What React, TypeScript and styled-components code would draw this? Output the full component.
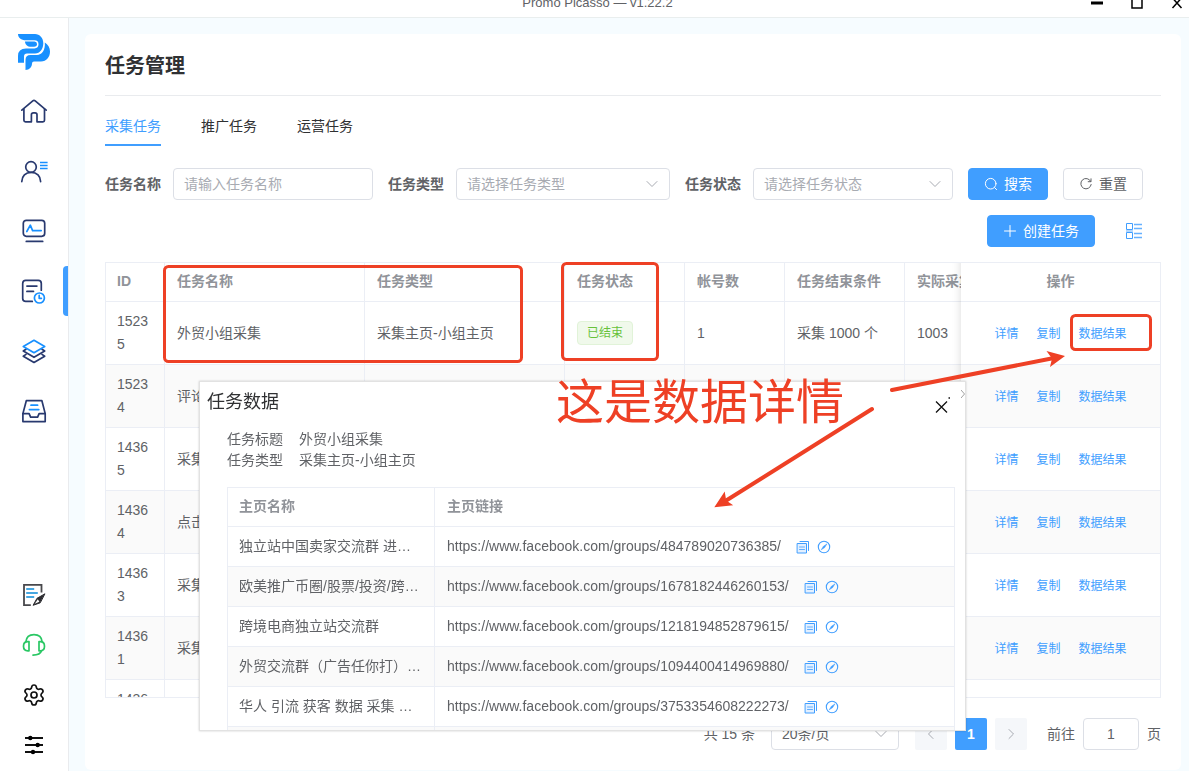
import React from "react";
import styled, { createGlobalStyle, css } from "styled-components";
import { Settings } from "lucide-react";

const color = {
  primary: "#409eff",
  brand: "#1890ff",
  navy: "#28396f",
  heading: "#303133",
  text: "#606266",
  muted: "#909399",
  placeholder: "#a8abb2",
  line: "#ebeef5",
  control: "#dcdfe6",
  stripe: "#fafafa",
  canvas: "#f6fcff",
  mark: "#ee4025",
};

const GlobalStyle = createGlobalStyle`
  *, *::before, *::after { box-sizing: border-box; }
  body {
    margin: 0;
    background: ${color.canvas};
    color: ${color.text};
    font-family: "Liberation Sans", "Noto Sans CJK SC", sans-serif;
    font-size: 14px;
  }
  button, input, select { font: inherit; color: inherit; margin: 0; }
  button { cursor: pointer; }
  svg { display: block; flex: none; }
`;

const Page = styled.div`
  position: relative;
  display: flex;
  flex-direction: column;
  min-height: 100vh;
  overflow: hidden;
`;

const TitleBar = styled.header`
  height: 18px;
  background: #fff;
  border-bottom: 1px solid #e9eeee;
  overflow: hidden;
`;

const TitleStrip = styled.div`
  display: grid;
  grid-template-columns: 1fr auto 1fr;
  align-items: center;
  height: 30px;
  margin-top: -12px;
  padding: 0 6px 0 12px;
`;

const WindowTitle = styled.span`
  grid-column: 2;
  font-size: 13px;
  line-height: 16px;
`;

const WindowButtons = styled.div`
  display: flex;
  justify-content: flex-end;
  gap: 28px;
`;

const BareButton = styled.button`
  display: inline-flex;
  align-items: center;
  justify-content: center;
  padding: 0;
  border: 0;
  background: none;
`;

const Body = styled.div`
  display: flex;
  flex: 1;
`;

const Sidebar = styled.nav`
  display: flex;
  flex-direction: column;
  flex: none;
  width: 69px;
  padding: 16px 0 1px;
  background: #fff;
  border-right: 1px solid #e9ebee;
`;

const Logo = styled.a`
  display: block;
  margin: 0 0 11px 18px;
`;

const NavItem = styled.a<{ $active?: boolean; $small?: boolean }>`
  position: relative;
  display: flex;
  align-items: center;
  justify-content: center;
  height: ${(p) => (p.$small ? 50 : 60)}px;
  ${(p) =>
    p.$active &&
    css`
      &::after {
        content: "";
        position: absolute;
        right: 0;
        width: 5px;
        height: 50px;
        border-radius: 4px 0 0 4px;
        background: ${color.primary};
      }
    `}
`;

const NavFooter = styled.div`
  margin-top: auto;
`;

const Main = styled.main`
  flex: 1;
  min-width: 0;
  padding: 16px 8px 1px 16px;
`;

const Card = styled.section`
  padding: 20px;
  background: #fff;
  border-radius: 6px;
`;

const Heading = styled.h1`
  margin: 0;
  padding-bottom: 17px;
  border-bottom: 1px solid #e9ebee;
  color: ${color.heading};
  font-size: 20px;
  line-height: 24px;
`;

const Tabs = styled.div`
  display: flex;
  gap: 40px;
  margin: 10px 0 22px;
`;

const Tab = styled.button<{ $active?: boolean }>`
  height: 40px;
  padding: 0;
  border: 0;
  border-bottom: 2px solid ${(p) => (p.$active ? color.primary : "transparent")};
  background: none;
  color: ${(p) => (p.$active ? color.primary : color.heading)};
`;

const Toolbar = styled.form`
  display: flex;
  flex-wrap: wrap;
  gap: 15px;
`;

const Field = styled.label`
  display: flex;
  align-items: center;
  gap: 12px;
  font-weight: 700;
`;

const FieldName = styled.span`
  padding-bottom: 2px;
`;

const controlStyle = css`
  height: 32px;
  padding: 0 10px;
  border: 1px solid ${color.control};
  border-radius: 4px;
  background: #fff;
  font-weight: 400;
  outline: 0;
`;

const TextInput = styled.input`
  ${controlStyle}
  width: 200px;
  &::placeholder {
    color: ${color.placeholder};
    opacity: 1;
  }
`;

const SelectWrap = styled.span<{ $width: number; $placeholder?: boolean }>`
  position: relative;
  width: ${(p) => p.$width}px;
  color: ${(p) => (p.$placeholder ? color.placeholder : color.text)};
  > svg {
    position: absolute;
    right: 11px;
    top: 9px;
    pointer-events: none;
  }
`;

const NativeSelect = styled.select`
  ${controlStyle}
  width: 100%;
  appearance: none;
`;

const Button = styled.button<{ $primary?: boolean }>`
  display: inline-flex;
  align-items: center;
  gap: 6px;
  height: 32px;
  padding: 0 15px 2px;
  border: 1px solid ${(p) => (p.$primary ? color.primary : color.control)};
  border-radius: 4px;
  background: ${(p) => (p.$primary ? color.primary : "#fff")};
  color: ${(p) => (p.$primary ? "#fff" : color.text)};
  > svg {
    margin-top: 2px;
  }
`;

const Actions = styled.div`
  display: flex;
  justify-content: flex-end;
  gap: 30px;
  margin: 15px 0;
  padding-right: 18px;
`;

const TableFrame = styled.div`
  height: 436px;
  border: 1px solid ${color.line};
  overflow: hidden;
`;

const Table = styled.table`
  width: 100%;
  border-collapse: separate;
  border-spacing: 0;
  table-layout: fixed;
`;

const Th = styled.th<{ $width?: number }>`
  width: ${(p) => (p.$width ? `${p.$width}px` : "auto")};
  height: 39px;
  padding: 0 12px 2px;
  border-right: 1px solid ${color.line};
  border-bottom: 1px solid ${color.line};
  background: #fff;
  color: ${color.muted};
  line-height: 22px;
  text-align: left;
  white-space: nowrap;
  &:first-child {
    padding-left: 11px;
  }
`;

const Td = styled.td`
  padding: 8px 12px;
  border-right: 1px solid ${color.line};
  border-bottom: 1px solid ${color.line};
  line-height: 23px;
  word-break: break-all;
  &:first-child {
    padding-left: 11px;
  }
`;

const Tr = styled.tr<{ $height: number }>`
  height: ${(p) => p.$height}px;
  td {
    background: #fff;
  }
  &:nth-child(even) td {
    background: ${color.stripe};
  }
  > :last-child {
    border-right: 0;
  }
`;

const pinned = css`
  position: sticky;
  right: 0;
  border-right: 0;
  text-align: center;
  &::before {
    content: "";
    position: absolute;
    top: 0;
    bottom: -1px;
    left: -10px;
    width: 10px;
    box-shadow: inset -10px 0 10px -10px rgba(0, 0, 0, 0.15);
  }
`;

const PinnedTh = styled(Th)`
  ${pinned}
`;

const PinnedTd = styled(Td)`
  ${pinned}
`;

const Links = styled.div`
  display: flex;
  justify-content: center;
  gap: 18px;
  padding-top: 3px;
`;

const RowLink = styled.a`
  color: ${color.primary};
  font-size: 12px;
  text-decoration: none;
`;

const Tag = styled.span`
  display: inline-block;
  height: 24px;
  padding: 0 9px;
  border: 1px solid #e1f3d8;
  border-radius: 4px;
  background: #f0f9eb;
  color: #67c23a;
  font-size: 12px;
  line-height: 22px;
  vertical-align: middle;
`;

const Pagination = styled.div`
  display: flex;
  align-items: center;
  justify-content: flex-end;
  gap: 8px;
  margin-top: 20px;
`;

const Total = styled.span`
  margin-right: 8px;
  padding-bottom: 2px;
`;

const Pages = styled.div`
  display: flex;
  gap: 8px;
  margin: 0 12px 0 8px;
`;

const PageButton = styled.button<{ $current?: boolean }>`
  display: flex;
  align-items: center;
  justify-content: center;
  width: 32px;
  height: 32px;
  padding: 0;
  border: 0;
  border-radius: 2px;
  background: ${(p) => (p.$current ? color.primary : "#f5f7fa")};
  color: ${(p) => (p.$current ? "#fff" : color.placeholder)};
  font-weight: 700;
`;

const Jumper = styled.label`
  display: flex;
  align-items: center;
  gap: 8px;
  > span {
    padding-bottom: 2px;
  }
`;

const PageInput = styled.input`
  ${controlStyle}
  width: 56px;
  text-align: center;
`;

const Dialog = styled.section`
  position: absolute;
  left: 199px;
  top: 381px;
  width: 767px;
  height: 350px;
  padding: 0 10px 0 27px;
  border: 1px solid #e2e2e2;
  background: #fff;
  box-shadow: 0 0 2px rgba(0, 0, 0, 0.2);
  overflow: hidden;
`;

const DialogHeader = styled.div`
  display: flex;
  align-items: center;
  justify-content: space-between;
  height: 38px;
  margin-left: -20px;
  padding-right: 4px;
`;

const DialogTitle = styled.h2`
  margin: 0;
  padding-bottom: 2px;
  color: ${color.heading};
  font-size: 18px;
  font-weight: 400;
`;

const CloseButton = styled(BareButton)`
  align-self: flex-end;
  padding-bottom: 4px;
`;

const Facts = styled.dl`
  display: grid;
  grid-template-columns: auto 1fr;
  column-gap: 16px;
  margin: 9px 0 16px;
  line-height: 21px;
  dd {
    margin: 0;
  }
`;

const DataTable = styled(Table)`
  border: 1px solid ${color.line};
  border-bottom: 0;
`;

const NameTd = styled(Td)`
  white-space: nowrap;
`;

const LinkCell = styled.div`
  display: flex;
  align-items: center;
  gap: 7px;
  color: ${color.primary};
`;

const LinkText = styled.span`
  margin-right: 8px;
  color: ${color.text};
`;

const EdgeArrow = styled.svg`
  position: absolute;
  right: 0;
  top: 6px;
`;

const Marks = styled.svg`
  position: absolute;
  left: 0;
  top: 0;
  pointer-events: none;
`;

const MarkText = styled.div`
  position: absolute;
  left: 556px;
  top: 379px;
  color: ${color.mark};
  font-size: 48px;
  line-height: 48px;
  white-space: nowrap;
`;

function Glyph({ size = 28, stroke = color.navy, width = 1.7, children }: {
  size?: number;
  stroke?: string;
  width?: number;
  children: React.ReactNode;
}) {
  return (
    <svg width={size} height={size} viewBox={`0 0 ${size} ${size}`} fill="none" stroke={stroke} strokeWidth={width} strokeLinecap="round" strokeLinejoin="round" aria-hidden="true">
      {children}
    </svg>
  );
}

const HomeIcon = () => (
  <Glyph>
    <path d="M1.8 13.2 12.8 3.8q1.2-1 2.4 0l11 9.4" />
    <path d="M3.9 12.2v11q0 1.6 1.6 1.6h5.9v-7q0-2 2-2h1.6q2 0 2 2v7h5.9q1.6 0 1.6-1.6v-11" />
  </Glyph>
);

const UserIcon = () => (
  <Glyph>
    <circle cx="11" cy="10" r="5.3" />
    <path d="M1.8 24.6C1.8 19 5.6 15.3 11.2 15.3s9.4 3.7 9.4 9.3" />
    <g stroke={color.brand} strokeWidth="1.4" strokeLinecap="butt">
      <path d="M20 5.5h7.6M20 8.5h7.6M20 11.5h7.6" />
    </g>
  </Glyph>
);

const MonitorIcon = () => (
  <Glyph>
    <rect x="3.3" y="3.3" width="21.4" height="16" rx="3" />
    <path d="M6.3 24.4h16.4" />
    <path d="m6.8 14.5 3.5-6.3 2.3 5.4h8.6" stroke={color.brand} />
  </Glyph>
);

const TaskIcon = () => (
  <Glyph>
    <path d="M12.3 24.4H5.7q-3 0-3-3V6.4q0-3 3-3h12.6q3 0 3 3v6.8" />
    <path d="M7 9.1h9.8M7 14.4h6.4" strokeWidth="1.9" />
    <g stroke={color.brand}>
      <circle cx="19.4" cy="21" r="5" />
      <path d="M19.2 18.4v2.9h2.2" />
    </g>
  </Glyph>
);

const LayersIcon = () => (
  <Glyph>
    <path d="M6 12.2 3.3 14 14 20.3 24.7 14 22 12.2" />
    <path d="M6 17.4 3.3 19.2 14 25.5l10.7-6.3-2.7-1.8" />
    <path d="m14 3.3 10.7 6.2L14 15.7 3.3 9.5z" stroke={color.brand} />
  </Glyph>
);

const InboxIcon = () => (
  <Glyph>
    <path d="M2.9 16.6 6.3 3.7h15.6l3.3 12.9v8H2.9z" />
    <path d="M2.9 16.6h6.2l1.5 3.6h7l1.5-3.6h6.1" />
    <path d="M11 8.2h6.6M9.4 12.6h9.4" stroke={color.brand} />
  </Glyph>
);

const EditIcon = () => (
  <Glyph stroke="#48484c" width={1.8}>
    <path d="M10.8 24.1H4V3.9h17.5v7.7" strokeLinecap="butt" strokeLinejoin="miter" />
    <path d="M6.2 8h8M6.2 12h11.6M6.2 16h8" stroke="#46a7e1" strokeWidth="2" strokeLinecap="butt" />
    <path d="M24.6 13 17 17.3l-3.9 7 6.8-2.4z" fill="#2c2c30" stroke="#2c2c30" strokeWidth="1" />
    <path d="m14.8 22.8 3-4.6 1.6 2.6z" fill="#fff" stroke="none" />
  </Glyph>
);

const HeadsetIcon = () => (
  <Glyph stroke="#2ac764">
    <path d="M5.9 10.8C6.3 6.2 9.5 3.6 14 3.6s7.7 2.6 8.1 7.2" />
    <path d="M9 10.6v9.2H7.8c-2.7 0-4.3-1.9-4.3-4.6s1.6-4.6 4.3-4.6z" />
    <path d="M19 10.6v9.2h1.2c2.7 0 4.3-1.9 4.3-4.6s-1.6-4.6-4.3-4.6z" />
    <path d="M21.5 19.8c-.8 2.8-3.2 4.3-8.5 4.3" />
  </Glyph>
);

const SlidersIcon = () => (
  <Glyph stroke="#111" width={1.8}>
    <path d="M5 7h18M5 14h18M5 21h18" strokeLinecap="butt" />
    <g fill="#000" stroke="none">
      <circle cx="10.3" cy="7" r="2.2" />
      <circle cx="17.7" cy="14" r="2.2" />
      <circle cx="13" cy="21" r="2.2" />
    </g>
  </Glyph>
);

const Chevron = ({ d = "m2 4.500 5 5 5-5" }: { d?: string }) => (
  <Glyph size={14} stroke={color.placeholder} width={1}>
    <path d={d} />
  </Glyph>
);

const SearchIcon = () => (
  <Glyph size={14} stroke="#fff" width={1}>
    <circle cx="6.7" cy="6.7" r="5.3" />
    <path d="m10.600 10.600 2 2" />
  </Glyph>
);

const ResetIcon = () => (
  <Glyph size={14} stroke={color.text} width={1}>
    <path d="M11.800 4.500A5.200 5.200 0 1 0 12.200 7.500" />
    <path d="M12 1.800v2.900H9.200" />
  </Glyph>
);

const PlusIcon = () => (
  <Glyph size={14} stroke="#fff" width={1}>
    <path d="M7 1.500v11M1.500 7h11" />
  </Glyph>
);

const ColumnsIcon = () => (
  <svg width="18" height="18" viewBox="0 0 18 18" fill="none" stroke={color.primary} aria-hidden="true">
    <path d="M1.500 1.500h6v6h-6zM1.500 10.500h6v6h-6z" />
    <path d="M1 9h7" strokeWidth="2" opacity=".4" />
    <path d="M9 2.500h8M9 6.500h8M9 11.500h8M9 15.500h8" strokeWidth="1.400" opacity=".8" />
  </svg>
);

const CopyIcon = () => (
  <Glyph size={14} stroke={color.primary} width={1}>
    <path d="M1.500 3.500h9v9.500h-9z" fill="#e3f0ff" />
    <path d="M4 1.500h8.500v9" />
    <path d="M3.500 7h5M3.500 9.500h5" opacity=".8" />
  </Glyph>
);

const CompassIcon = () => (
  <Glyph size={14} stroke={color.primary} width={1.1}>
    <circle cx="7" cy="7" r="5.7" />
    <path d="M9.700 4.300 7.600 7.600 4.300 9.700 6.400 6.400z" fill={color.primary} strokeWidth=".6" />
  </Glyph>
);

const navItems = [
  { label: "首页", icon: <HomeIcon /> },
  { label: "账号", icon: <UserIcon /> },
  { label: "监控", icon: <MonitorIcon /> },
  { label: "任务", icon: <TaskIcon />, active: true },
  { label: "素材", icon: <LayersIcon /> },
  { label: "收件箱", icon: <InboxIcon /> },
];

const footerItems = [
  { label: "反馈", icon: <EditIcon /> },
  { label: "客服", icon: <HeadsetIcon /> },
  { label: "设置", icon: <Settings size={24} color="#111" strokeWidth={1.7} /> },
  { label: "偏好", icon: <SlidersIcon /> },
];

type Task = { id: string; name: string; type?: string; done?: boolean; accounts?: string; end?: string; actual?: string };

const tasks: Task[] = [
  { id: "15235", name: "外贸小组采集", type: "采集主页-小组主页", done: true, accounts: "1", end: "采集 1000 个", actual: "1003" },
  { id: "15234", name: "评论" },
  { id: "14365", name: "采集" },
  { id: "14364", name: "点击" },
  { id: "14363", name: "采集" },
  { id: "14361", name: "采集" },
  { id: "14360", name: "" },
];

const groups = [
  { name: "独立站中国卖家交流群 进…", id: "484789020736385" },
  { name: "欧美推广币圈/股票/投资/跨…", id: "1678182446260153" },
  { name: "跨境电商独立站交流群", id: "1218194852879615" },
  { name: "外贸交流群（广告任你打）…", id: "1094400414969880" },
  { name: "华人 引流 获客 数据 采集 …", id: "3753354608222273" },
];

function SelectBox({ width, text, placeholder, label }: { width: number; text: string; placeholder?: boolean; label?: string }) {
  return (
    <SelectWrap $width={width} $placeholder={placeholder}>
      <NativeSelect aria-label={label}>
        <option>{text}</option>
      </NativeSelect>
      <Chevron />
    </SelectWrap>
  );
}

function TaskTable() {
  return (
    <TableFrame>
      <Table>
        <thead>
          <tr>
            <Th $width={59}>ID</Th>
            <Th $width={200}>任务名称</Th>
            <Th $width={200}>任务类型</Th>
            <Th $width={120}>任务状态</Th>
            <Th $width={100}>帐号数</Th>
            <Th $width={120}>任务结束条件</Th>
            <Th $width={120}>实际采集数</Th>
            <PinnedTh $width={199}>操作</PinnedTh>
          </tr>
        </thead>
        <tbody>
          {tasks.map((t) => (
            <Tr key={t.id} $height={63}>
              <Td>{t.id}</Td>
              <Td>{t.name}</Td>
              <Td>{t.type}</Td>
              <Td>{t.done && <Tag>已结束</Tag>}</Td>
              <Td>{t.accounts}</Td>
              <Td>{t.end}</Td>
              <Td>{t.actual}</Td>
              <PinnedTd>
                <Links>
                  <RowLink href="#detail">详情</RowLink>
                  <RowLink href="#copy">复制</RowLink>
                  <RowLink href="#result">数据结果</RowLink>
                </Links>
              </PinnedTd>
            </Tr>
          ))}
        </tbody>
      </Table>
    </TableFrame>
  );
}

function TaskDataDialog() {
  return (
    <Dialog role="dialog" aria-label="任务数据">
      <DialogHeader>
        <DialogTitle>任务数据</DialogTitle>
        <CloseButton aria-label="关闭">
          <svg width="18" height="20" viewBox="0 0 18 20" fill="none" stroke="#111" strokeWidth="1.300" aria-hidden="true">
            <path d="m3 5.500 11 11M14 5.500l-11 11M15.500 2h1.500" />
          </svg>
        </CloseButton>
      </DialogHeader>
      <EdgeArrow width="4" height="12" viewBox="0 0 4 12" fill="none" stroke="#a0a0a0">
        <path d="m0 2 3.500 4L0 10" />
      </EdgeArrow>
      <Facts>
        <dt>任务标题</dt>
        <dd>外贸小组采集</dd>
        <dt>任务类型</dt>
        <dd>采集主页-小组主页</dd>
      </Facts>
      <DataTable>
        <thead>
          <Tr $height={39}>
            <Th $width={207}>主页名称</Th>
            <Th>主页链接</Th>
          </Tr>
        </thead>
        <tbody>
          {groups.map((g) => (
            <Tr key={g.id} $height={40}>
              <NameTd>{g.name}</NameTd>
              <Td>
                <LinkCell>
                  <LinkText>{`https://www.facebook.com/groups/${g.id}/`}</LinkText>
                  <BareButton aria-label="复制链接"><CopyIcon /></BareButton>
                  <BareButton aria-label="打开链接"><CompassIcon /></BareButton>
                </LinkCell>
              </Td>
            </Tr>
          ))}
          <Tr $height={40}>
            <Td />
            <Td />
          </Tr>
        </tbody>
      </DataTable>
    </Dialog>
  );
}

export default function App() {
  return (
    <Page>
      <GlobalStyle />
      <TitleBar>
        <TitleStrip>
          <WindowTitle>Promo Picasso — v1.22.2</WindowTitle>
          <WindowButtons>
            <BareButton aria-label="最小化">
              <svg width="12" height="12" stroke="#000" strokeWidth="3"><path d="M0 6h12" /></svg>
            </BareButton>
            <BareButton aria-label="最大化">
              <svg width="12" height="12" fill="none" stroke="#000" strokeWidth="1.500"><path d="M1 1h10v10H1z" /></svg>
            </BareButton>
            <BareButton aria-label="关闭窗口">
              <svg width="12" height="12" fill="none" stroke="#000" strokeWidth="1.500"><path d="m1.500 1 9 10M10.500 1l-9 10" /></svg>
            </BareButton>
          </WindowButtons>
        </TitleStrip>
      </TitleBar>
      <Body>
        <Sidebar>
          <Logo href="#home" aria-label="Promo Picasso">
            <svg width="32" height="36" viewBox="0 0 32 36" fill={color.brand}>
              <path d="M0 0H17C21.700 0 25.300 4 25.300 9.300 25.300 15 22 19.500 17 19.500H9Q6 19.500 6 22.500V28.700H0V22Q0 14.500 8 14.500H16.500Q20.500 14 20.500 10.200 20.500 6.300 16.500 6.300H8C3 6.300 0 3.500 0 0Z" />
              <path d="M7 7.500H16.500Q19 7.800 19 10 19 12.800 16 12.800H13C9.500 12.800 7 10.500 7 7.500Z" />
              <path d="M26.800 8.500C30 10.500 32 13.500 32 17.500 32 23 28.500 27.500 23 27.500H16Q14 27.500 14 29.500C14 33 11.500 36 7.500 36V26Q7.500 21 12.500 21H19C24 21 27.500 16 26.800 8.500Z" />
            </svg>
          </Logo>
          {navItems.map((n) => (
            <NavItem key={n.label} href="#nav" aria-label={n.label} $active={n.active}>{n.icon}</NavItem>
          ))}
          <NavFooter>
            {footerItems.map((n) => (
              <NavItem key={n.label} href="#nav" aria-label={n.label} $small>{n.icon}</NavItem>
            ))}
          </NavFooter>
        </Sidebar>
        <Main>
          <Card>
            <Heading>任务管理</Heading>
            <Tabs role="tablist">
              <Tab role="tab" $active>采集任务</Tab>
              <Tab role="tab">推广任务</Tab>
              <Tab role="tab">运营任务</Tab>
            </Tabs>
            <Toolbar>
              <Field>
                <FieldName>任务名称</FieldName>
                <TextInput type="text" placeholder="请输入任务名称" />
              </Field>
              <Field>
                <FieldName>任务类型</FieldName>
                <SelectBox width={214} text="请选择任务类型" placeholder />
              </Field>
              <Field>
                <FieldName>任务状态</FieldName>
                <SelectBox width={200} text="请选择任务状态" placeholder />
              </Field>
              <Button type="button" $primary><SearchIcon />搜索</Button>
              <Button type="reset"><ResetIcon />重置</Button>
            </Toolbar>
            <Actions>
              <Button type="button" $primary><PlusIcon />创建任务</Button>
              <BareButton aria-label="列设置"><ColumnsIcon /></BareButton>
            </Actions>
            <TaskTable />
            <Pagination>
              <Total>共 15 条</Total>
              <SelectBox width={128} text="20条/页" label="每页条数" />
              <Pages>
                <PageButton aria-label="上一页"><Chevron d="M9 2.500 4.500 7 9 11.500" /></PageButton>
                <PageButton $current>1</PageButton>
                <PageButton aria-label="下一页"><Chevron d="M5 2.500 9.500 7 5 11.500" /></PageButton>
              </Pages>
              <Jumper>
                <span>前往</span>
                <PageInput type="text" defaultValue="1" />
                <span>页</span>
              </Jumper>
            </Pagination>
          </Card>
        </Main>
      </Body>
      <TaskDataDialog />
      <Marks width="1189" height="771" viewBox="0 0 1189 771" fill="none" stroke={color.mark} strokeWidth="3" strokeLinecap="round" aria-hidden="true">
        <rect x="164.500" y="266.500" width="357" height="95" rx="4" />
        <rect x="562.500" y="263.500" width="95" height="96" rx="4" />
        <rect x="1071.500" y="315.500" width="79" height="34" rx="4" />
        <path d="m892 390 162-32M872 409l-145 91" strokeWidth="4" />
        <g fill={color.mark} stroke="none">
          <path d="m1065 356-18.500-5 5.500 7.500-2 8.500z" />
          <path d="m714.300 507.300 10.400-15.800 1.500 9 7 4.700z" />
        </g>
      </Marks>
      <MarkText>这是数据详情</MarkText>
    </Page>
  );
}
